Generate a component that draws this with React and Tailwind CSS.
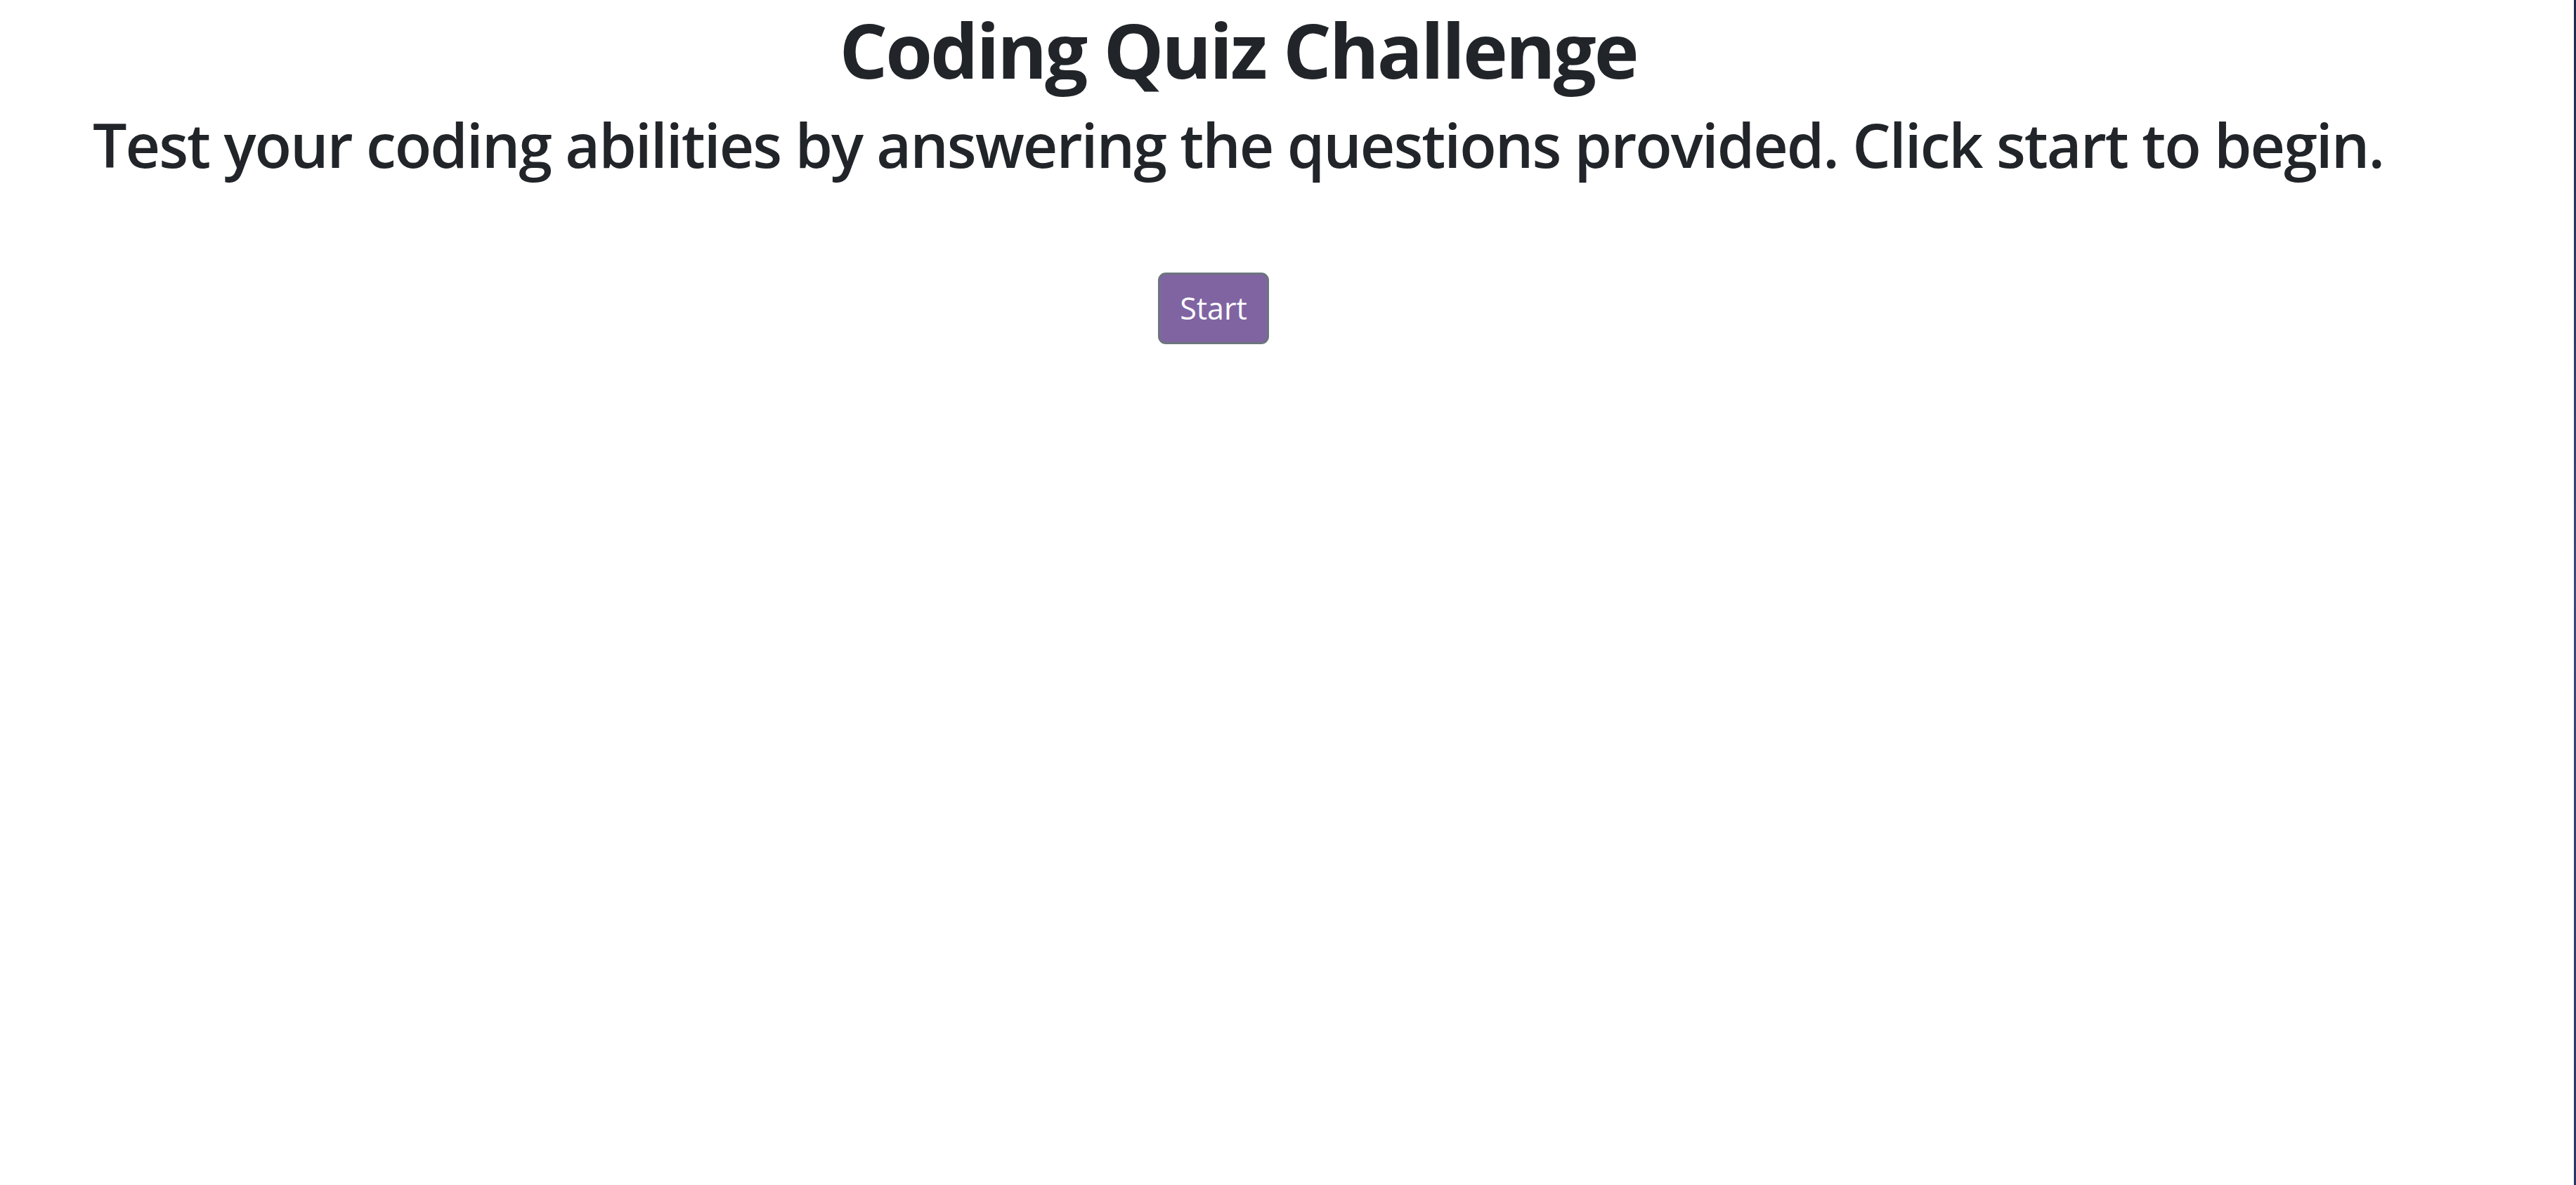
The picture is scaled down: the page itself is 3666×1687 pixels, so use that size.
export default function App() {
  return (
    <div className="flex min-h-screen bg-white">
      <main
        className="flex-1 pr-[139px] text-[#212529] text-center"
        style={{ fontFamily: '"Open Sans", "Noto Sans", sans-serif' }}
      >
        <h1 className="text-[108px] font-bold leading-[1.2] tracking-[-3px] mt-[6px]">
          Coding Quiz Challenge
        </h1>
        <h2 className="text-[86px] font-semibold leading-[1.2] tracking-[-2px] mt-[18px]">
          Test your coding abilities by answering the questions provided. Click start to begin.
        </h2>
        <div className="flex justify-center pr-[70px] mt-[131px]">
          <button className="bg-[#8064a2] text-white text-[43px] leading-[1.5] px-[28px] py-[16px] border-[3px] border-[#6c757d] rounded-[11px]">
            Start
          </button>
        </div>
      </main>
      <div className="w-[3px] bg-gradient-to-b from-[#1f2a4a] via-[#3b4a7a] to-[#2a3560]" />
    </div>
  );
}
